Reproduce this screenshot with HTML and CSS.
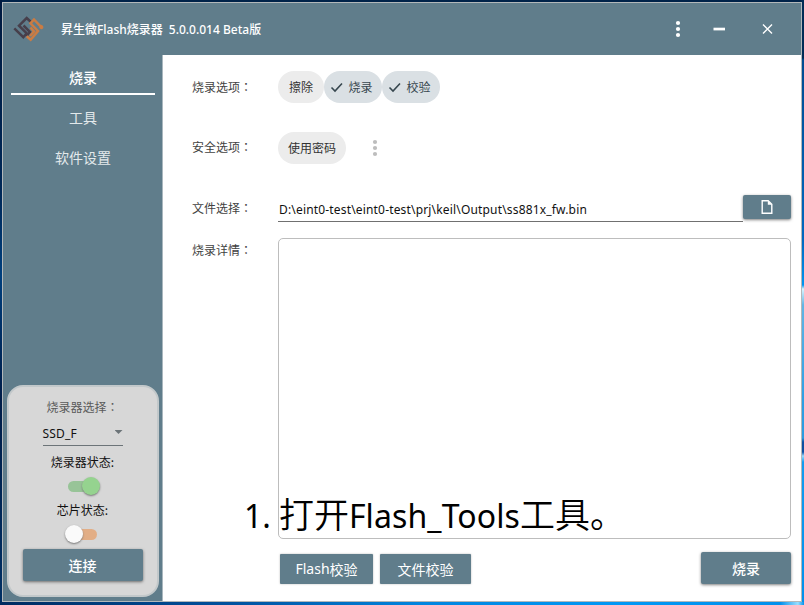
FILE: index.html
```html
<!DOCTYPE html>
<html lang="zh-CN">
<head>
<meta charset="utf-8">
<title>昇生微Flash烧录器</title>
<link rel="stylesheet" href="styles.css">
</head>
<body>
<div class="window">
  <header class="titlebar">
    <svg class="logo" width="32" height="28" viewBox="0 0 32 28" fill="none" stroke-width="2.500">
      <path stroke="#473f4b" d="M18 6L13.700 2 6 9.700l7.700 7.600-3.400 3.900L1.300 12.300M10.500 9.500l6.500 6.500-3.500 4"/>
      <path stroke="#cb7c43" d="M29.700 12.700L21 3.500l-3.500 3.800 7.500 7.700-7.300 8.700-4-3.500M29.500 9.500l-2.500 3M17.500 11.500l3.500 4-4 4.500"/>
    </svg>
    <h1 class="title">昇生微<span class="latin">Flash</span>烧录器<span class="latin version">5.0.0.014 Beta</span>版</h1>
    <svg class="controls" width="110" height="20" viewBox="0 0 110 20" fill="#fff">
      <circle cx="7" cy="4" r="2.100"/><circle cx="7" cy="10" r="2.100"/><circle cx="7" cy="16" r="2.100"/>
      <rect x="42.500" y="8.700" width="11.500" height="2.700"/>
      <path d="M92 5.500l9 9M101 5.500l-9 9" stroke="#fff" stroke-width="1.400"/>
    </svg>
  </header>
  <div class="body">
    <aside class="sidebar">
      <nav class="nav">
        <a class="tab active">烧录</a>
        <a class="tab">工具</a>
        <a class="tab">软件设置</a>
      </nav>
      <section class="device">
        <div class="caption">烧录器选择<span class="colon" lang="zh-TW">：</span></div>
        <div class="select"><span>SSD_F</span><i class="arrow"></i></div>
        <div class="status">烧录器状态:</div>
        <div class="switch on"><i class="knob"></i></div>
        <div class="status chip-status">芯片状态:</div>
        <div class="switch off"><i class="knob"></i></div>
        <button class="button connect">连接</button>
      </section>
    </aside>
    <main class="main">
      <div class="row options">
        <div class="label">烧录选项<span class="colon" lang="zh-TW">：</span></div>
        <div class="chips">
          <span class="chip erase">擦除</span>
          <span class="chip checked"><svg width="14" height="12" viewBox="0 0 14 12"><path d="M1.500 6.500l3.500 3.500L12 2.500"/></svg>烧录</span>
          <span class="chip checked"><svg width="14" height="12" viewBox="0 0 14 12"><path d="M1.500 6.500l3.500 3.500L12 2.500"/></svg>校验</span>
        </div>
      </div>
      <div class="row security">
        <div class="label">安全选项<span class="colon" lang="zh-TW">：</span></div>
        <span class="chip password">使用密码</span>
        <svg class="more" width="6" height="18" viewBox="0 0 6 18" fill="#bdbdbd"><circle cx="3" cy="3" r="2.100"/><circle cx="3" cy="9" r="2.100"/><circle cx="3" cy="15" r="2.100"/></svg>
      </div>
      <div class="row file">
        <div class="label">文件选择<span class="colon" lang="zh-TW">：</span></div>
        <div class="path"><span>D:\eint0-test\eint0-test\prj\keil\Output\ss881x_fw.bin</span></div>
        <button class="button browse"><svg width="12" height="14" viewBox="0 0 12 14"><path d="M1.700.700h5.500l3.600 3.600v9H1.200V.700z" fill="none" stroke="#fff" stroke-width="1.400"/><path d="M6.800.500v4.300h4.300z" fill="#fff"/></svg></button>
      </div>
      <div class="row details">
        <div class="label">烧录详情<span class="colon" lang="zh-TW">：</span></div>
        <div class="log"></div>
      </div>
      <div class="actions">
        <button class="button flat flash"><span class="latin">Flash</span>校验</button>
        <button class="button flat verify">文件校验</button>
        <button class="button burn">烧录</button>
      </div>
    </main>
  </div>
</div>
<div class="step"><span class="latin num">1.</span>打开<span class="latin word">Flash_Tools</span>工具。</div>
</body>
</html>
```
FILE: styles.css
```css
* { box-sizing: border-box; }

body {
  margin: 0;
  width: 804px;
  height: 605px;
  padding: 2px 2px 3px;
  overflow: hidden;
  position: relative;
  font-family: "Noto Sans CJK SC", sans-serif;
  font-size: 12px;
  line-height: 16px;
  color: #424242;
  background:
    linear-gradient(#002b55 0 58px, #004c91 60px, #0068c0 240px, #0095f0 285px, #d9f5ff 289px, #62b5e4 305px, #2e9fe4 400px, #2b9be0 438px, #0e4fa0 442px 452px, #9adcff 456px, #129cf0 462px, #0090ec) right top / 3px 602px no-repeat,
    linear-gradient(90deg, #002b60, #00519e 230px, #0085df 420px, #0098f5 620px, #0090ec 780px, #9adfff 798px, #0090ec) left bottom / 100% 4px no-repeat,
    linear-gradient(#001a40, #002857 190px, #003f7d 275px, #001d48 400px, #003064) left top / 2px 100% no-repeat,
    #002349;
}

.window {
  width: 800px;
  height: 600px;
  border: 1px solid #b3b8ba;
  background: #fff;
  display: flex;
  flex-direction: column;
}

.latin { font-family: "Noto Sans", sans-serif; }
.colon { font-family: "Noto Sans CJK TC", sans-serif; }

.titlebar {
  flex: 0 0 52px;
  background: #607d8b;
  color: #fff;
  display: flex;
  align-items: center;
  padding: 0 20px 0 10px;
}
.logo { margin-top: 2px; }
.title { margin: 1px 0 0 16px; font-size: 12px; font-weight: 500; white-space: nowrap; }
.version { margin-left: 6px; }
.controls { margin-left: auto; }

.body { flex: 1; display: flex; min-height: 0; }

.sidebar {
  width: 160px;
  background: #607d8b;
  border-right: 1px solid #a9b7be;
  display: flex;
  flex-direction: column;
  justify-content: space-between;
  padding: 4px 3px 4px 4px;
}
.nav { display: flex; flex-direction: column; padding: 0 4px; }
.tab {
  height: 40px;
  line-height: 36px;
  text-align: center;
  font-size: 14px;
  color: #e3e9eb;
}
.tab.active { height: 36px; margin-bottom: 4px; color: #fff; font-weight: 500; border-bottom: 2px solid #fff; }

.device {
  height: 212px;
  border: 2px solid #c2c8ca;
  border-radius: 16px;
  background: #d7d7d7;
  display: flex;
  flex-direction: column;
  align-items: center;
  padding: 12px 1px 0 0;
}
.caption { color: #5a5a5a; }
.select {
  width: 80px;
  height: 23px;
  margin-top: 8px;
  border-bottom: 1px solid #6c7478;
  color: #111;
  font-family: "Noto Sans", sans-serif;
  line-height: 21px;
  letter-spacing: .2px;
  display: flex;
  justify-content: space-between;
}
.arrow { width: 8px; height: 4px; margin-top: 7px; background: #6c7478; clip-path: polygon(0 0, 100% 0, 50% 100%); }
.status { color: #111; margin-top: 8px; }
.chip-status { margin-top: 6px; }
.switch { width: 32px; height: 20px; margin-top: 6px; display: flex; align-items: center; border-radius: 10px; }
.switch::before { content: ""; height: 11px; width: 20px; border-radius: 6px; background: #98c498; }
.knob { width: 18px; height: 18px; border-radius: 50%; background: #95d38f; box-shadow: 0 1px 2px #777; flex: none; z-index: 1; }
.switch.on { margin-left: 3px; }
.switch.on::before { margin-right: -6px; }
.switch.off { flex-direction: row-reverse; margin-right: 3px; }
.switch.off::before { margin-left: -6px; background: #e2ae86; }
.switch.off .knob { background: #fafafa; }

.button {
  border: 0;
  padding: 0;
  border-radius: 2px;
  background: #607d8b;
  color: #fff;
  font: 500 14px/20px "Noto Sans CJK SC", sans-serif;
  box-shadow: 0 1px 3px rgba(0, 0, 0, .5);
  display: flex;
  align-items: center;
  justify-content: center;
}
.connect { width: 120px; height: 32px; margin-top: 5px; padding-bottom: 1px; }

.main { flex: 1; padding: 16px 10px 0 29px; display: flex; flex-direction: column; }
.row { display: flex; }
.label { width: 86px; flex: none; white-space: nowrap; }
.options { height: 61px; }
.options .label { margin-top: 8px; }
.security .label { margin-top: 7px; }
.chips { display: flex; }
.chip {
  height: 32px;
  border-radius: 16px;
  background: #ececec;
  color: #333;
  display: flex;
  align-items: center;
  justify-content: center;
}
.erase { width: 46px; }
.checked { width: 58px; gap: 4px; padding-right: 3px; background: #dae0e4; color: #37474f; }
.checked svg { fill: none; stroke: #37474f; stroke-width: 1.600; }
.security { height: 62px; }
.password { width: 68px; }
.more { margin: 7px 0 0 26px; }
.file { height: 44px; }
.file .label { margin-top: 6px; }
.path {
  width: 465px;
  height: 28px;
  border-bottom: 1px solid #707070;
  padding: 8px 0 0 1px;
  font-family: "Noto Sans", sans-serif;
  letter-spacing: .17px;
  color: #111;
  white-space: nowrap;
}
.browse { width: 48px; height: 24px; margin-top: 1px; flex: none; }
.details .label { margin-top: 4px; }
.log { flex: 1; height: 301px; border: 1px solid #bdbdbd; border-radius: 5px; }
.actions { display: flex; padding: 13px 0 0 88px; }
.flat { height: 30px; border-radius: 1px; margin-top: 2px; font-weight: 400; box-shadow: 0 0 2px rgba(0, 0, 0, .3); }
.flash { width: 93px; }
.verify { width: 91px; margin-left: 7px; }
.burn { width: 90px; height: 32px; margin-left: auto; }

.step {
  position: absolute;
  left: 244px;
  top: 493px;
  font-size: 35px;
  line-height: 40px;
  color: #000;
  font-weight: 350;
  white-space: nowrap;
}
.step .latin { font-size: 32px; font-weight: 400; }
.step .num { margin-right: 8px; }
.step .word { letter-spacing: .1px; }
```
